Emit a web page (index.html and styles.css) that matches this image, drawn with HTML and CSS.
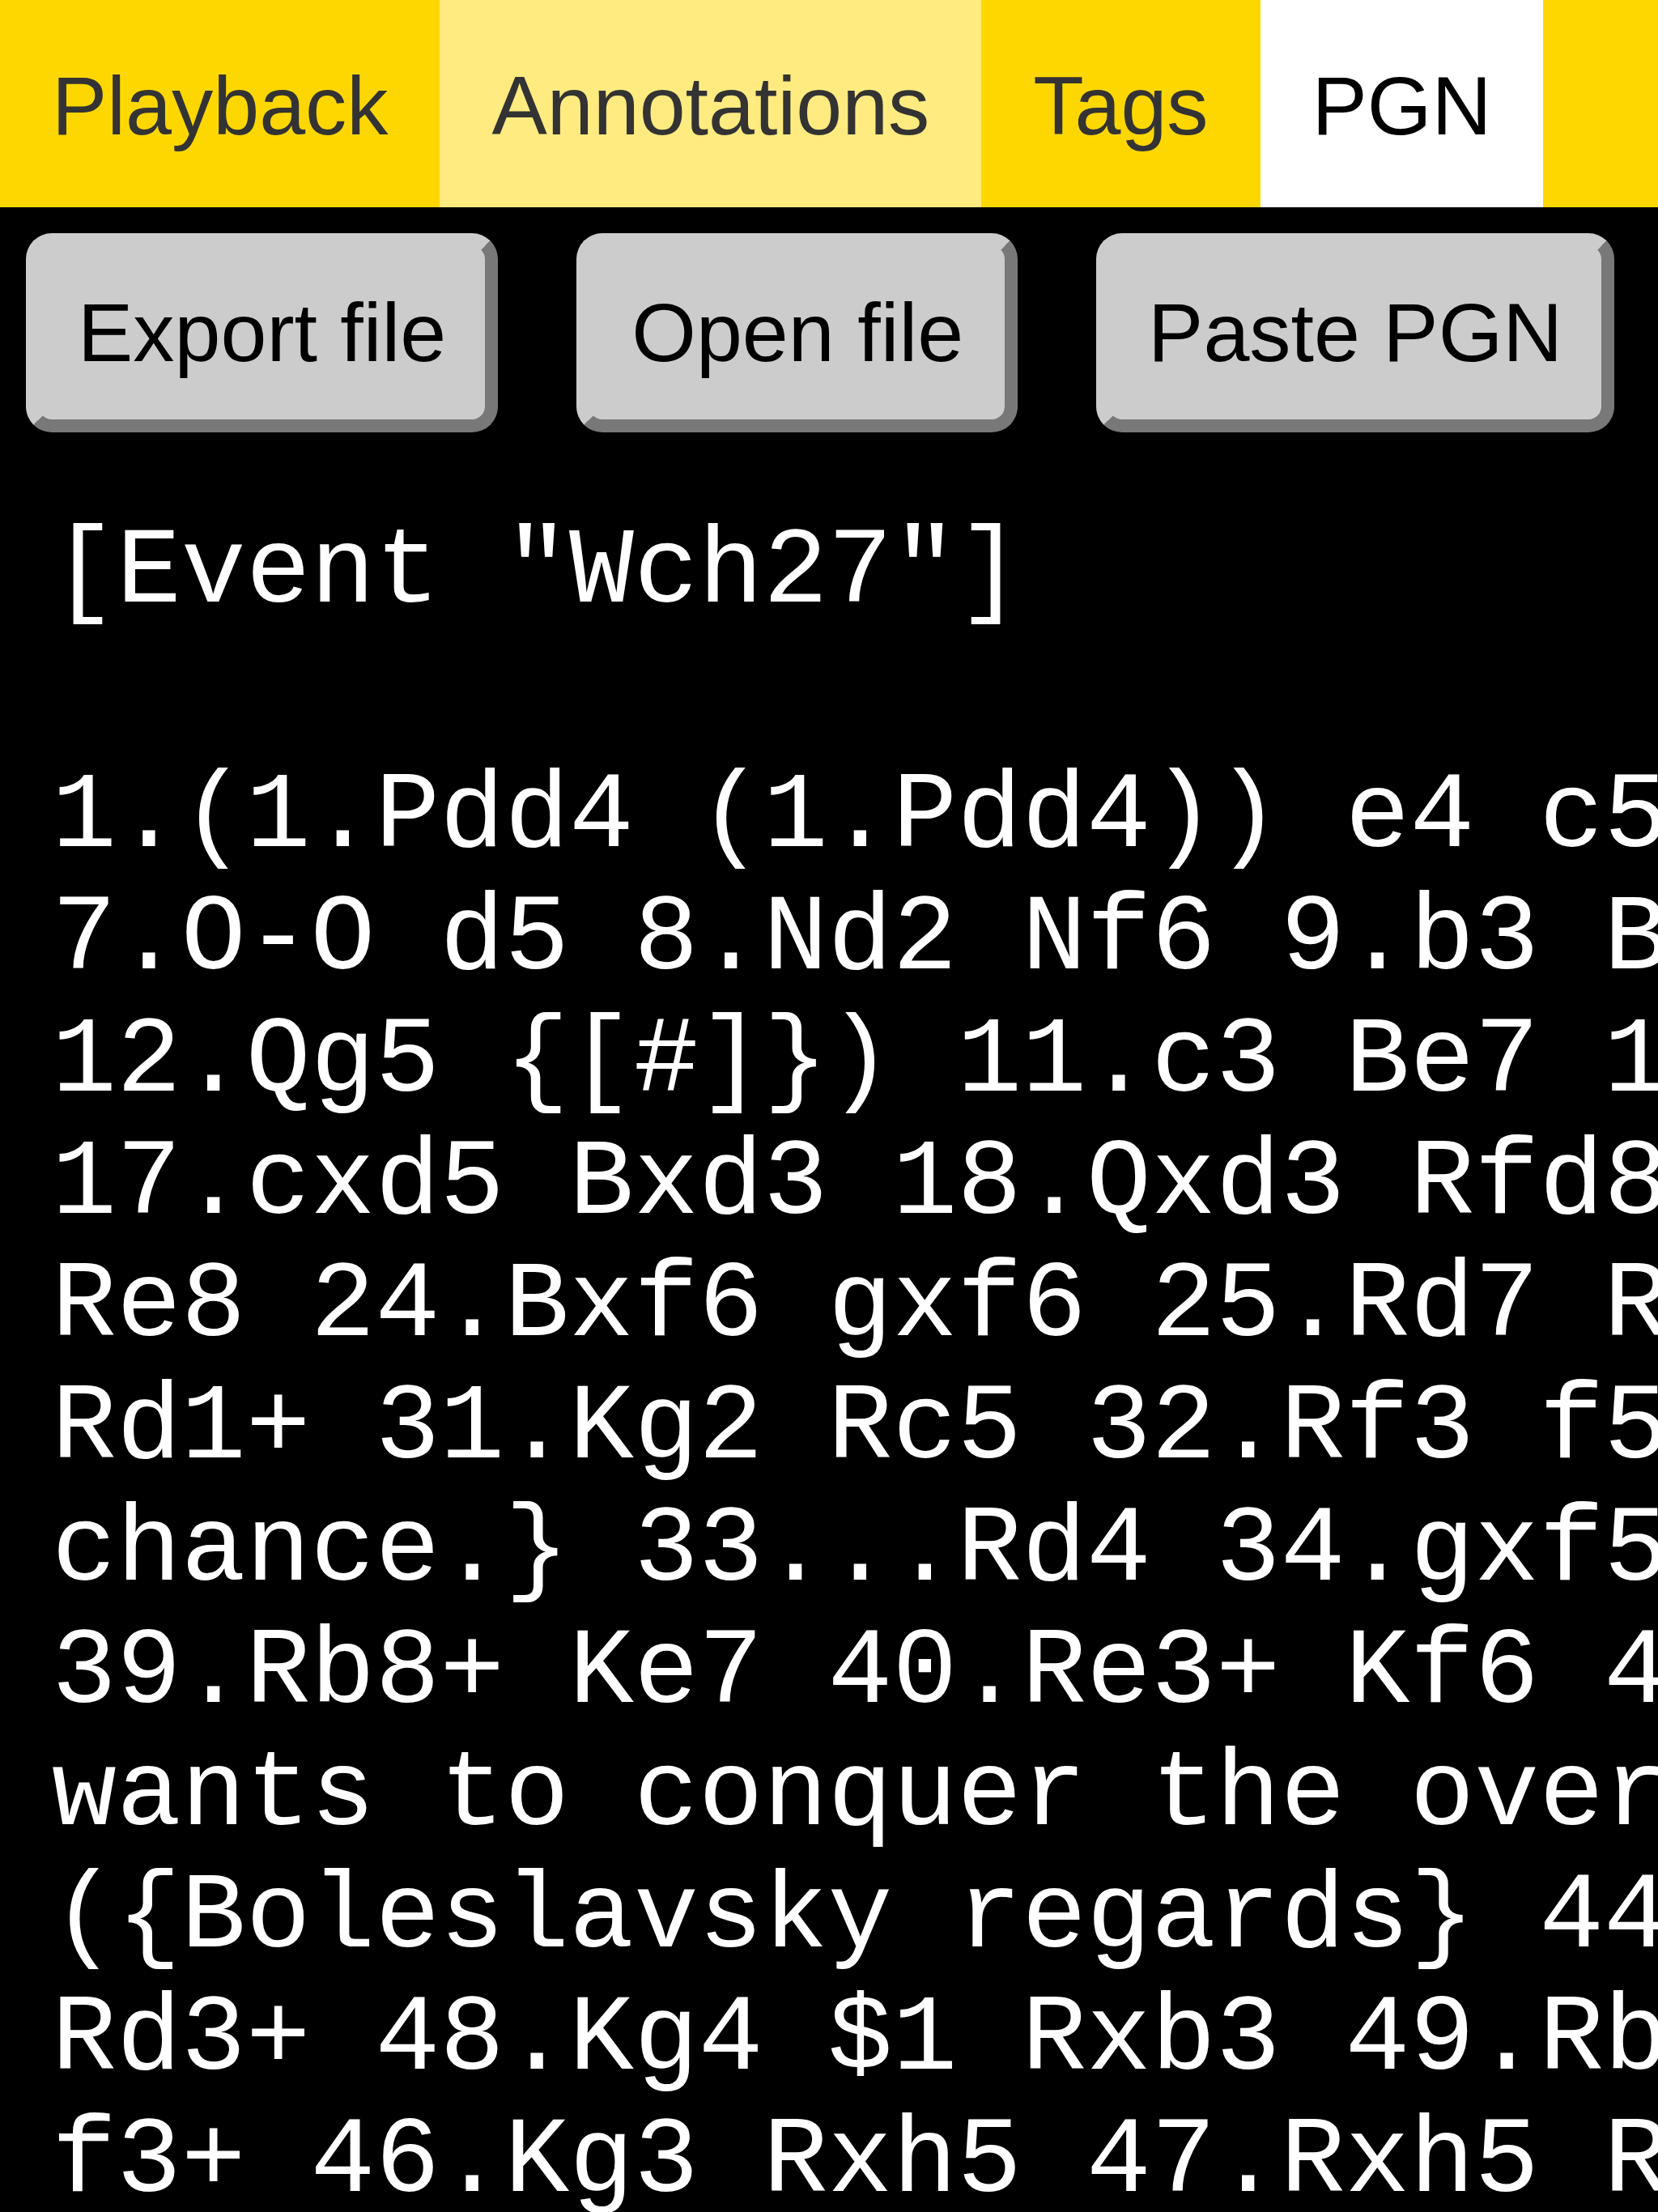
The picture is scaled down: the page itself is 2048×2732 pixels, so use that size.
FILE: index.html
```html
<!DOCTYPE html>
<html lang="en">
<head>
<meta charset="utf-8">
<title>PGN</title>
<link rel="stylesheet" href="styles.css">
</head>
<body>
<nav class="tabs">
  <div class="tab">Playback</div>
  <div class="tab tab-hover">Annotations</div>
  <div class="tab">Tags</div>
  <div class="tab tab-active">PGN</div>
</nav>
<div class="actions">
  <button class="btn">Export file</button>
  <button class="btn btn-open">Open file</button>
  <button class="btn">Paste PGN</button>
</div>
<pre class="pgn">[Event "Wch27"]

1.(1.Pdd4 (1.Pdd4)) e4 c5 2.Nf3 Nc6 3.d4 cxd4 4.Nxd4 e6 5.Nc3 Qc7 6.Be3 a6
7.O-O d5 8.Nd2 Nf6 9.b3 Be7 10.Bb2 O-O 11.Qe2 Rd8 (10...b5 11.Qh5 g6
12.Qg5 {[#]}) 11.c3 Be7 12.Bd3 Bd7 13.Qe2 Rc8 14.Rac1 Nb4 15.Bb1 dxe4
17.cxd5 Bxd3 18.Qxd3 Rfd8 19.Rfd1 Rxd5 20.Qe2 Rxd1+ 21.Rxd1 Qc6 22.Qe5
Re8 24.Bxf6 gxf6 25.Rd7 Rb8 26.Rd4 Kg7 27.h4 h5 28.g4 hxg4 29.Rxg4+ Kf8
Rd1+ 31.Kg2 Rc5 32.Rf3 f5 33.g4 {White has given Black a drawing
chance.} 33...Rd4 34.gxf5 exf5 35.Re3 Rc2 36.Re8+ Kg7 37.Rb8 Rxa2
39.Rb8+ Ke7 40.Re3+ Kf6 41.Rb6+ Kg7 42.Rbe6 Rdd2 43.R3e5 {Black
wants to conquer the over-extended h-pawn.} 43...Rd4 44.Rxf5 Rxb4
({Boleslavsky regards} 44...Rxh4 45.Rf3 Rh5 46.Ree3 {as a draw.})
Rd3+ 48.Kg4 $1 Rxb3 49.Rb5 Rb1 50.Kf5 Rf1+ 51.Ke5 Re1+ 52.Kd6 Rd1+
f3+ 46.Kg3 Rxh5 47.Rxh5 Rxe6 48.Kxf3 Kg6 49.Rh8 Kg7 50.Rh4 1/2-1/2
</pre>
</body>
</html>
```

FILE: styles.css
```css
html, body {
  margin: 0;
  padding: 0;
  background: #000;
}

body {
  overflow: hidden;
  font-family: "Liberation Sans", Arial, sans-serif;
}

.tabs {
  display: flex;
  background: #ffd700;
  height: 256px;
}

.tab {
  display: flex;
  align-items: center;
  padding: 6px 64px 0;
  font-size: 102.4px;
  color: #333;
  background: #ffd700;
  white-space: nowrap;
}

.tab-hover {
  background: #ffeb80;
}

.tab-active {
  background: #fff;
  color: #000;
}

.actions {
  display: flex;
  gap: 97px;
  padding: 32px 32px 0;
}

.btn {
  font-family: "Liberation Sans", Arial, sans-serif;
  font-size: 102.4px;
  line-height: normal;
  color: #000;
  background: #ccc;
  border: 16px outset #ccc;
  border-radius: 32px;
  padding: 48px;
  margin: 0;
  white-space: nowrap;
}

.btn-open {
  padding: 48px 51px 48px 52px;
}

.pgn {
  margin: 98px 0 0;
  padding: 0 0 0 64px;
  font-family: "Liberation Mono", "Courier New", monospace;
  font-size: 133.12px;
  line-height: normal;
  color: #fff;
  white-space: pre;
  overflow: hidden;
}
```
